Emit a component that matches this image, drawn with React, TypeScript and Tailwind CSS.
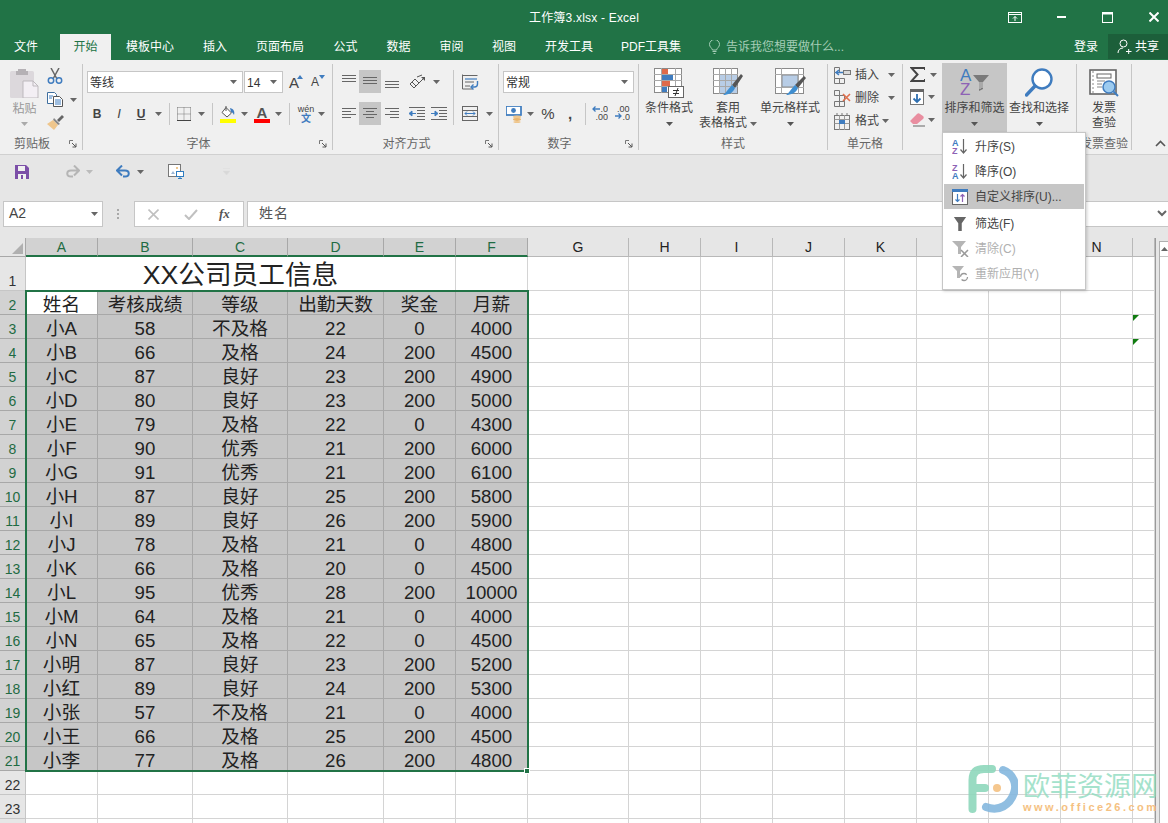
import React from 'react';

const F = { fontFamily: '"Liberation Sans","Noto Sans CJK SC",sans-serif' };

function Caret({ c = '#666' }: { c?: string }) {
  return (
    <svg width="7" height="4" viewBox="0 0 7 4" className="shrink-0">
      <path d="M0 0h7L3.5 4z" fill={c} />
    </svg>
  );
}

function Launcher() {
  return (
    <svg width="8" height="8" viewBox="0 0 8 8">
      <path d="M.5 4V.5H4M.5.5" fill="none" stroke="#777" />
      <path d="M3 3l4 4M7 3.5V7H3.5" fill="none" stroke="#555" />
    </svg>
  );
}

function Group({ className, label, launcher, children }: { className: string; label?: string; launcher?: boolean; children: React.ReactNode }) {
  return (
    <div className={`flex h-full shrink-0 flex-col border-r border-[#c6c6c6] ${className}`}>
      <div className="h-[74px] shrink-0">{children}</div>
      <div className="flex h-[12px] items-center">
        <div className="flex-1 text-center text-[12px] leading-[15px] text-[#666]">{label}</div>
        {launcher && (
          <div className="flex w-[18px] justify-center">
            <Launcher />
          </div>
        )}
      </div>
    </div>
  );
}

function Combo({ className, text }: { className: string; text: string }) {
  return (
    <div className={`flex h-[22px] items-center justify-between border border-[#c6c6c6] bg-white pl-[2px] pr-[5px] text-[12px] text-[#333] ${className}`}>
      <span className="pt-[2px]">{text}</span>
      <Caret />
    </div>
  );
}

function Slot({ className, children }: { className: string; children?: React.ReactNode }) {
  return <div className={`flex h-full shrink-0 items-center justify-center ${className}`}>{children}</div>;
}

function Sep() {
  return <div className="h-[22px] w-px bg-[#c6c6c6]" />;
}

function Lines({ ys, xs, w = 16, h = 14 }: { ys: number[]; xs: [number, number][]; w?: number; h?: number }) {
  return (
    <svg width={w} height={h} viewBox={`0 0 ${w} ${h}`}>
      {ys.map((y, i) => (
        <path key={i} d={`M${xs[i][0]} ${y + 0.5}H${xs[i][1]}`} stroke="#666" />
      ))}
    </svg>
  );
}

function Big({ className, lines, icon, caret = true, inline }: { className: string; lines: string[]; icon: React.ReactNode; caret?: boolean; inline?: boolean }) {
  return (
    <div className={`flex h-full shrink-0 flex-col items-center ${className}`}>
      <div className="flex h-[37px] w-full items-center justify-center">{icon}</div>
      {lines.map((l, i) => (
        <div key={i} className="flex items-center gap-[3px] whitespace-nowrap text-[12px] leading-[15px] text-[#444]">
          {l}
          {inline && i === lines.length - 1 && <Caret />}
        </div>
      ))}
      {caret && !inline && (
        <div className="flex h-[15px] items-center">
          <Caret c="#555" />
        </div>
      )}
    </div>
  );
}

function IconPaste() {
  return (
    <svg width="30" height="30" viewBox="0 0 30 30">
      <rect x="0" y="3" width="24" height="27" rx="1.5" fill="#dcd8dc" />
      <path d="M8 3V1h8v2h2v4H6V3z" fill="#b5b1b5" />
      <path d="M13 13h10l5 5v12H13z" fill="#f3eff4" stroke="#bdb9bd" />
      <path d="M23 13v5h5" fill="none" stroke="#bdb9bd" />
    </svg>
  );
}
function IconScissors() {
  return (
    <svg width="16" height="16" viewBox="0 0 16 16" fill="none">
      <path d="M4 0l6 11M12 0L6 11" stroke="#666" strokeWidth="1.5" />
      <circle cx="4" cy="12.5" r="2.7" stroke="#3f7cbf" strokeWidth="1.5" />
      <circle cx="12" cy="12.5" r="2.7" stroke="#3f7cbf" strokeWidth="1.5" />
    </svg>
  );
}
function IconCopy() {
  return (
    <svg width="16" height="15" viewBox="0 0 16 15" fill="none">
      <path d="M.5.5h7l2 2v9H.5z" fill="#fff" stroke="#3f6f9f" />
      <path d="M6.5 4.5h6l3 3v7h-9z" fill="#fff" stroke="#555" />
      <path d="M8 8h6M8 10h6M8 12h6" stroke="#3f7cbf" />
      <path d="M2 4h4M2 6h3" stroke="#3f7cbf" />
    </svg>
  );
}
function IconBrush() {
  return (
    <svg width="17" height="16" viewBox="0 0 17 16">
      <path d="M10 6l5-5 2 2-5 5z" fill="#666" />
      <path d="M7 4l6 6-2 1-5-5z" fill="#888" />
      <path d="M6 6l5 5-4 5-7-6z" fill="#efc68c" />
    </svg>
  );
}
function IconBorder() {
  return (
    <svg width="14" height="14" viewBox="0 0 14 14" fill="none">
      <path d="M.5.5h13M.5 7h13M.5.5v13M7 .5v13M13.5.5v13" stroke="#777" strokeDasharray="1 1" />
      <path d="M0 13.5h14" stroke="#444" />
    </svg>
  );
}
function IconFill() {
  return (
    <div className="flex w-[16px] flex-col items-center">
      <svg width="16" height="13" viewBox="0 0 16 13" fill="none">
        <path d="M6 1.5l5.5 5.5L7 11 2 6.5z" fill="#fff" stroke="#555" />
        <path d="M6 0v5" stroke="#555" />
        <path d="M10 2c4 1 5 4 4 7-1-2-2-3-3-3z" fill="#3f7cbf" />
      </svg>
      <div className="h-[4px] w-[16px] bg-[#ffff00]" />
    </div>
  );
}
function IconFontColor() {
  return (
    <div className="flex w-[16px] flex-col items-center">
      <span className="h-[13px] text-[15px] font-bold leading-[13px] text-[#555]">A</span>
      <div className="h-[4px] w-[16px] bg-[#ff0000]" />
    </div>
  );
}
function IconWen() {
  return (
    <div className="flex flex-col items-center">
      <span className="text-[9px] leading-[10px] text-[#444]">wén</span>
      <span className="text-[10px] font-bold leading-[10px] text-[#3f7cbf]">文</span>
    </div>
  );
}
function IconOrient() {
  return (
    <svg width="17" height="15" viewBox="0 0 17 15" fill="none">
      <path d="M1 10l5-5 4 4-5 5z" stroke="#555" />
      <path d="M3 8l4 4M8 3l5-2" stroke="#555" />
      <path d="M6 13L15 4" stroke="#555" />
      <path d="M12 3h4v4z" fill="#555" />
    </svg>
  );
}
function IconWrap() {
  return (
    <svg width="17" height="16" viewBox="0 0 17 16" fill="none">
      <path d="M.5 1.5h15M.5.5v14.5h10" stroke="#666" />
      <path d="M3 5h12" stroke="#3f7cbf" strokeWidth="1.2" />
      <path d="M3 8h9M3 12h5" stroke="#666" />
      <path d="M15.5 7v3c0 2-1 3-3 3H10" stroke="#3f7cbf" strokeWidth="1.4" />
      <path d="M11.5 10.5L9 13l2.5 2.5" stroke="#3f7cbf" strokeWidth="1.4" />
    </svg>
  );
}
function IconMerge() {
  return (
    <svg width="16" height="15" viewBox="0 0 16 15" fill="none">
      <rect x=".5" y=".5" width="15" height="14" stroke="#666" />
      <path d="M.5 4.5h15M.5 10.5h15" stroke="#666" />
      <path d="M3 7.5h10M3 7.5l2-2M3 7.5l2 2M13 7.5l-2-2M13 7.5l-2 2" stroke="#3f7cbf" />
    </svg>
  );
}
function IconIndent({ flip }: { flip?: boolean }) {
  return (
    <svg width="16" height="13" viewBox="0 0 16 13" fill="none">
      <path d="M0 .5h16M8 3.5h8M8 6.5h8M8 9.5h8M0 12.5h16" stroke="#666" />
      {flip ? (
        <path d="M0 6.5h4V4l3 2.5L4 9V6.5" fill="#3f7cbf" stroke="#3f7cbf" />
      ) : (
        <path d="M7 6.5H3V4L0 6.5 3 9V6.5" fill="#3f7cbf" stroke="#3f7cbf" />
      )}
    </svg>
  );
}
function IconCurrency() {
  return (
    <svg width="17" height="17" viewBox="0 0 17 17">
      <rect x="0" y="0" width="15" height="9" fill="#fff" stroke="#3f7cbf" />
      <rect x="0" y="0" width="15" height="9" fill="none" stroke="#3f7cbf" strokeWidth="1.5" />
      <circle cx="7.5" cy="4.5" r="2.4" fill="#3f7cbf" />
      <ellipse cx="11" cy="11" rx="4" ry="1.4" fill="#efc68c" />
      <ellipse cx="11" cy="13.5" rx="4" ry="1.4" fill="#e9b56e" />
      <ellipse cx="11" cy="16" rx="3.6" ry="1" fill="#efc68c" />
    </svg>
  );
}
function IconDec({ inc }: { inc?: boolean }) {
  return (
    <svg width="16" height="18" viewBox="0 0 16 18">
      <text x={inc ? 3 : 16} y="7" textAnchor={inc ? 'start' : 'end'} fontSize="9" fontFamily="Liberation Sans" fill="#444">{inc ? '.00' : '.0'}</text>
      <text x="16" y="15" textAnchor="end" fontSize="9" fontFamily="Liberation Sans" fill="#444">{inc ? '.0' : '.00'}</text>
      {inc ? <path d="M1 11h6M4.5 8.5L7 11l-2.5 2.5" stroke="#3f7cbf" fill="none" strokeWidth="1.3" /> : <path d="M8 4H1M3.5 1.5L1 4l2.5 2.5" stroke="#3f7cbf" fill="none" strokeWidth="1.3" />}
    </svg>
  );
}
function IconCond() {
  return (
    <svg width="31" height="30" viewBox="0 0 31 30" fill="none">
      <rect x=".5" y=".5" width="27" height="24" fill="#fff" stroke="#8a8a8a" />
      <path d="M7.5 0v25M21.5 0v25M0 6.5h28M0 12.5h28M0 18.5h28" stroke="#a8a8a8" />
      <rect x="8" y="1" width="6" height="5" fill="#de6a4a" />
      <rect x="8" y="7" width="11" height="5" fill="#3f7cbf" />
      <rect x="8" y="13" width="8" height="5" fill="#de6a4a" />
      <rect x="8" y="19" width="5" height="5" fill="#3f7cbf" />
      <rect x="14.5" y="18.5" width="15" height="11" fill="#fff" stroke="#666" />
      <path d="M19 22.5h6M19 25.5h6M24 20l-3 8" stroke="#333" />
    </svg>
  );
}
function IconTable() {
  return (
    <svg width="30" height="30" viewBox="0 0 30 30" fill="none">
      <rect x=".5" y=".5" width="24" height="25" fill="#fff" stroke="#8a8a8a" />
      <rect x="7" y="7" width="17" height="18" fill="#b8cde6" />
      <path d="M6.5 0v26M12.5 0v26M18.5 0v26M0 6.5h25M0 12.5h25M0 18.5h25" stroke="#a8a8a8" />
      <path d="M19 17L28 6l2 2-8 12z" fill="#555" />
      <path d="M19 17l3 3c-2 5-7 7-12 7 3-2 5-6 9-10z" fill="#3f8ed0" />
    </svg>
  );
}
function IconCellStyle() {
  return (
    <svg width="31" height="30" viewBox="0 0 31 30" fill="none">
      <rect x=".5" y=".5" width="28" height="25" fill="#fff" stroke="#8a8a8a" />
      <rect x="7" y="7" width="16" height="12" fill="#b8cde6" stroke="#8a8a8a" />
      <path d="M0 6.5h29M6.5 0v26M0 19.5h29M23.5 0v26" stroke="#a8a8a8" />
      <path d="M20 17l9-9 2 2-8 10z" fill="#555" />
      <path d="M20 17l3 3c-2 5-7 7-12 7 3-2 5-6 9-10z" fill="#3f8ed0" />
    </svg>
  );
}
function IconInsert() {
  return (
    <svg width="17" height="17" viewBox="0 0 17 17" fill="none">
      <path d="M.5.5h5v5h-5zM.5 11.5h5v5h-5zM5.5 11.5h5v5h-5z" stroke="#777" />
      <path d="M.5 5.5v6" stroke="#777" />
      <rect x="9.5" y="3.5" width="7" height="4" fill="#d8d8d8" stroke="#777" />
      <path d="M9 5.5H2M5 3L2 5.5 5 8" stroke="#3f7cbf" strokeWidth="1.5" />
    </svg>
  );
}
function IconDelete() {
  return (
    <svg width="17" height="17" viewBox="0 0 17 17" fill="none">
      <path d="M.5.5h5v5h-5zM.5 11.5h5v5h-5zM5.5 11.5h5v5h-5zM5.5 5.5h5v6h-5z" stroke="#777" />
      <path d="M9 4l7 7M16 4l-7 7" stroke="#e0704e" strokeWidth="1.6" />
    </svg>
  );
}
function IconFormat() {
  return (
    <svg width="17" height="17" viewBox="0 0 17 17" fill="none">
      <rect x=".5" y="2.5" width="15" height="14" stroke="#777" />
      <path d="M.5 6.5h15M.5 10.5h15M5.5 2v15M10.5 2v15" stroke="#999" />
      <path d="M3 0v2M8 0v2M13 0v2" stroke="#777" />
      <rect x="5" y="7" width="6" height="4" fill="#3f7cbf" />
    </svg>
  );
}
function IconSigma() {
  return (
    <svg width="15" height="15" viewBox="0 0 15 15" fill="none">
      <path d="M15 3V1H1.500l6 6.500L1.500 14H15v-2" stroke="#444" strokeWidth="2" />
    </svg>
  );
}
function IconFillDown() {
  return (
    <svg width="14" height="16" viewBox="0 0 14 16" fill="none">
      <rect x=".5" y=".5" width="13" height="15" fill="#fff" stroke="#777" />
      <rect x="0" y="0" width="14" height="3" fill="#666" />
      <path d="M7 5v8M3.500 9.500L7 13l3.500-3.500" stroke="#2f6fb0" strokeWidth="1.8" />
    </svg>
  );
}
function IconEraser() {
  return (
    <svg width="15" height="14" viewBox="0 0 15 14">
      <path d="M0 8l7-7c1-1 2-1 3 0l3 2c1 1 1 2 0 3L7 11H3z" fill="#e98ea0" />
      <path d="M3 13h12" stroke="#666" />
    </svg>
  );
}
function IconAZ({ w = 30, h = 33, az = true, size = 17, arrow, dy = 15, by = 29, bold }: { w?: number; h?: number; az?: boolean; size?: number; arrow?: React.ReactNode; dy?: number; by?: number; bold?: boolean }) {
  const top = az ? 'A' : 'Z';
  const bot = az ? 'Z' : 'A';
  const c1 = az ? '#3f7cbf' : '#8e62b5';
  const c2 = az ? '#8e62b5' : '#3f7cbf';
  const weight = bold ? 'bold' : 'normal';
  return (
    <svg width={w} height={h} viewBox={`0 0 ${w} ${h}`}>
      <text x="0" y={dy} fontSize={size} fontWeight={weight} fontFamily="Liberation Sans" fill={c1}>{top}</text>
      <text x="0" y={by} fontSize={size} fontWeight={weight} fontFamily="Liberation Sans" fill={c2}>{bot}</text>
      {arrow}
    </svg>
  );
}
function IconFind() {
  return (
    <svg width="28" height="29" viewBox="0 0 28 29" fill="none">
      <circle cx="17" cy="11" r="9.500" fill="#fff" stroke="#3f7cbf" strokeWidth="2.4" />
      <path d="M10 18L1.500 27" stroke="#3f7cbf" strokeWidth="3.4" strokeLinecap="round" />
    </svg>
  );
}
function IconInvoice() {
  return (
    <svg width="31" height="28" viewBox="0 0 31 28" fill="none">
      <rect x="1" y="1" width="26" height="24" fill="#fff" stroke="#666" strokeWidth="1.6" />
      <path d="M4 2v22" stroke="#888" strokeDasharray="2 2" />
      <rect x="8" y="5" width="14" height="4" stroke="#666" />
      <path d="M8 12h8M8 15h5M8 18h5" stroke="#888" />
      <circle cx="20" cy="18" r="6" fill="#9ccbf0" stroke="#3f7cbf" strokeWidth="1.5" />
      <path d="M24.500 22.500L29 27" stroke="#3f7cbf" strokeWidth="2" />
    </svg>
  );
}
function IconFunnel({ c = '#666', w = 14, h = 16 }: { c?: string; w?: number; h?: number }) {
  return (
    <svg width={w} height={h} viewBox="0 0 14 16">
      <path d="M0 0h14L9 7v9H5V7z" fill={c} />
    </svg>
  );
}

const ROWS: string[][] = [
  ['小A', '58', '不及格', '22', '0', '4000'],
  ['小B', '66', '及格', '24', '200', '4500'],
  ['小C', '87', '良好', '23', '200', '4900'],
  ['小D', '80', '良好', '23', '200', '5000'],
  ['小E', '79', '及格', '22', '0', '4300'],
  ['小F', '90', '优秀', '21', '200', '6000'],
  ['小G', '91', '优秀', '21', '200', '6100'],
  ['小H', '87', '良好', '25', '200', '5800'],
  ['小I', '89', '良好', '26', '200', '5900'],
  ['小J', '78', '及格', '21', '0', '4800'],
  ['小K', '66', '及格', '20', '0', '4500'],
  ['小L', '95', '优秀', '28', '200', '10000'],
  ['小M', '64', '及格', '21', '0', '4000'],
  ['小N', '65', '及格', '22', '0', '4500'],
  ['小明', '87', '良好', '23', '200', '5200'],
  ['小红', '89', '良好', '24', '200', '5300'],
  ['小张', '57', '不及格', '21', '0', '4000'],
  ['小王', '66', '及格', '25', '200', '4500'],
  ['小李', '77', '及格', '26', '200', '4800'],
];
const HEAD = ['考核成绩', '等级', '出勤天数', '奖金', '月薪'];
const COLS = ['A', 'B', 'C', 'D', 'E', 'F', 'G', 'H', 'I', 'J', 'K', 'L', 'M', 'N', ''];
const TEMPLATE = 'grid grid-cols-[26px_72px_95px_95px_96px_72px_72px_101px_72px_72px_72px_72px_72px_72px_72px_22px]';

function RowHead({ n, sel, tall }: { n?: number; sel: boolean; tall?: boolean }) {
  return (
    <div className={`flex items-end justify-center border-r border-b text-[14px] leading-[18px] ${tall ? 'h-[34px]' : 'h-[24px]'} ${sel ? 'border-[#a8a8a8] bg-[#d2d2d2] text-[#1f6b43]' : 'border-[#c6c6c6] bg-[#e6e6e6] text-[#333]'}`}>
      {n}
    </div>
  );
}

function Sel({ children, white }: { children?: React.ReactNode; white?: boolean }) {
  return (
    <div className={`flex h-[24px] items-start justify-center border-r border-b border-[#a8a8a8] text-[18.67px] leading-[28px] text-[#222] ${white ? 'bg-white' : 'bg-[#c6c6c6]'}`}>
      {children}
    </div>
  );
}

function Blank({ children }: { children?: React.ReactNode }) {
  return <div className="h-[24px] border-r border-b border-[#d4d4d4] bg-white">{children}</div>;
}

function Tri() {
  return <div className="h-0 w-0 border-t-[6px] border-r-[6px] border-t-[#107c10] border-r-transparent" />;
}

function BlankRest({ row }: { row: number }) {
  return (
    <>
      {Array.from({ length: 8 }).map((_, i) => (
        <Blank key={i} />
      ))}
      <Blank>{(row === 3 || row === 4) && <Tri />}</Blank>
    </>
  );
}

function MenuItem({ icon, text, hi, dis, className = '' }: { icon: React.ReactNode; text: string; hi?: boolean; dis?: boolean; className?: string }) {
  return (
    <div className={`flex h-[25px] items-center ${hi ? 'bg-[#c6c6c6]' : ''} ${className}`}>
      <div className="flex w-[31px] justify-center pl-[1px]">{icon}</div>
      <span className={`text-[12px] ${dis ? 'text-[#b0b0b0]' : 'text-[#444]'}`}>{text}</span>
    </div>
  );
}

const Arrow = <path d="M11.500 1v14M8.500 11.500l3 3.500 3-3.500" fill="none" stroke="#666" strokeWidth="1.200" />;

export default function App() {
  return (
    <div className="relative h-[823px] w-[1168px] overflow-hidden bg-white" style={F}>
      {/* Title bar */}
      <div className="grid h-[34px] grid-cols-[1fr_auto_1fr] items-center bg-[#217346] text-white">
        <div />
        <div className="pt-[1px] text-[12px] tracking-[0.2px]">工作簿3.xlsx - Excel</div>
        <div className="flex h-full items-center justify-end">
          <Slot className="w-[46px]">
            <svg width="14" height="11" viewBox="0 0 14 11" fill="none">
              <rect x=".5" y=".5" width="13" height="10" stroke="#fff" />
              <path d="M1 2.500h12" stroke="#fff" />
              <path d="M7 9V4.500M5 6.500l2-2 2 2" stroke="#fff" />
            </svg>
          </Slot>
          <Slot className="w-[46px]">
            <div className="h-[2px] w-[9px] bg-white" />
          </Slot>
          <Slot className="w-[47px]">
            <svg width="11" height="11" viewBox="0 0 11 11" fill="none">
              <rect x=".5" y=".5" width="10" height="10" stroke="#fff" />
              <path d="M0 1.500h11" stroke="#fff" strokeWidth="2" />
            </svg>
          </Slot>
          <Slot className="w-[37px] pl-[9px]">
            <svg width="10" height="10" viewBox="0 0 10 10" fill="none">
              <path d="M.5.500l9 9M9.500.500l-9 9" stroke="#fff" strokeWidth="2" />
            </svg>
          </Slot>
        </div>
      </div>

      {/* Tabs */}
      <div className="flex h-[26px] items-stretch bg-[#217346] text-[12px] text-white">
        <Slot className="w-[52px]">文件</Slot>
        <div className="w-[8px]" />
        <Slot className="w-[51px] bg-[#f0f0f0] text-[#217346]">开始</Slot>
        <Slot className="w-[78px]">模板中心</Slot>
        <Slot className="w-[52px]">插入</Slot>
        <Slot className="w-[78px]">页面布局</Slot>
        <Slot className="w-[53px]">公式</Slot>
        <Slot className="w-[53px]">数据</Slot>
        <Slot className="w-[53px]">审阅</Slot>
        <Slot className="w-[52px]">视图</Slot>
        <Slot className="w-[78px]">开发工具</Slot>
        <Slot className="w-[86px]">PDF工具集</Slot>
        <Slot className="ml-[14px] w-[13px]">
          <svg width="11" height="14" viewBox="0 0 11 14" fill="none">
            <path d="M3.500 10C3 8 .5 7 .5 4.500a5 5 0 0 1 10 0C10.500 7 8 8 7.500 10z" stroke="#a5cdb6" />
            <path d="M3.500 11.500h4M4.500 13.500h2" stroke="#a5cdb6" />
          </svg>
        </Slot>
        <Slot className="ml-[5px] text-[#a5cdb6]">告诉我您想要做什么...</Slot>
        <div className="flex-1" />
        <Slot className="w-[44px]">登录</Slot>
        <div className="mb-[1px] flex w-[60px] items-center justify-center gap-[3px] bg-[#1c5f3a]">
          <svg width="15" height="15" viewBox="0 0 15 15" fill="none">
            <circle cx="6.500" cy="4.500" r="3.500" stroke="#fff" />
            <path d="M1 14c0-3 2-5 5-5M9 12.500h5.500M11.700 10v5" stroke="#fff" />
          </svg>
          共享
        </div>
      </div>

      {/* Ribbon */}
      <div className="flex h-[95px] items-start border-b border-[#d0d0d0] bg-[#f0f0f0] pt-[4px]">
        <div className="flex h-[86px] w-full">
          <Group className="w-[83px]" label="剪贴板" launcher>
            <div className="flex h-full">
              <div className="flex w-[45px] flex-col items-center pl-[4px] pt-[4px]">
                <IconPaste />
                <div className="mt-[4px] text-[12px] leading-[15px] text-[#999]">粘贴</div>
                <div className="mt-[5px]"><Caret c="#aaa" /></div>
              </div>
              <div className="flex flex-1 flex-col items-start pl-[1px]">
                <Slot className="!h-[24px] w-[18px]"><IconScissors /></Slot>
                <div className="flex h-[23px] items-center gap-[6px]">
                  <Slot className="w-[18px]"><IconCopy /></Slot>
                  <Caret />
                </div>
                <Slot className="!h-[22px] w-[18px]"><IconBrush /></Slot>
              </div>
            </div>
          </Group>

          <Group className="w-[250px]" label="字体" launcher>
            <div className="flex flex-col pt-[7px]">
              <div className="flex items-center pl-[4px]">
                <Combo className="w-[156px]" text="等线" />
                <Combo className="ml-[1px] w-[39px]" text="14" />
                <Slot className="ml-[2px] w-[22px]">
                  <span className="text-[15px] leading-none text-[#444]">A</span>
                  <svg width="6" height="4" viewBox="0 0 6 4" className="-ml-[2px] -mt-[10px]"><path d="M3 0l3 4H0z" fill="#3f7cbf" /></svg>
                </Slot>
                <Slot className="w-[22px]">
                  <span className="text-[12px] leading-none text-[#444]">A</span>
                  <svg width="6" height="4" viewBox="0 0 6 4" className="-mt-[10px]"><path d="M0 0h6L3 4z" fill="#3f7cbf" /></svg>
                </Slot>
              </div>
              <div className="mt-[9px] flex h-[24px] items-center pl-[3px]">
                <Slot className="w-[22px] text-[12px] font-bold text-[#444]">B</Slot>
                <Slot className="w-[22px] text-[13px] italic text-[#444]">I</Slot>
                <Slot className="w-[22px] text-[12px] font-bold text-[#444] underline">U</Slot>
                <Slot className="w-[12px]"><Caret /></Slot>
                <Slot className="w-[10px]"><Sep /></Slot>
                <Slot className="w-[20px]"><IconBorder /></Slot>
                <Slot className="w-[14px]"><Caret /></Slot>
                <Slot className="w-[8px]"><Sep /></Slot>
                <Slot className="w-[24px]"><IconFill /></Slot>
                <Slot className="w-[9px]"><Caret /></Slot>
                <Slot className="w-[26px]"><IconFontColor /></Slot>
                <Slot className="w-[7px]"><Caret /></Slot>
                <Slot className="w-[14px]"><Sep /></Slot>
                <Slot className="w-[20px]"><IconWen /></Slot>
                <Slot className="w-[10px]"><Caret /></Slot>
              </div>
            </div>
          </Group>

          <Group className="w-[166px]" label="对齐方式" launcher>
            <div className="flex h-full pl-[5px] pt-[6px]">
              <div className="flex h-[55px] w-[116px] flex-col justify-between border-r border-[#c6c6c6]">
                <div className="flex h-[23px]">
                  <Slot className="w-[21px]"><Lines w={14} h={14} ys={[0, 3, 6]} xs={[[0, 14], [0, 14], [0, 14]]} /></Slot>
                  <Slot className="w-[22px] bg-[#c6c6c6]"><Lines w={14} h={9} ys={[0, 3, 6]} xs={[[0, 14], [0, 14], [0, 14]]} /></Slot>
                  <Slot className="w-[22px]"><div className="pt-[7px]"><Lines w={14} h={8} ys={[0, 3, 6]} xs={[[0, 14], [0, 14], [0, 14]]} /></div></Slot>
                  <Slot className="w-[28px]"><IconOrient /></Slot>
                  <Slot className="w-[10px]"><Caret /></Slot>
                </div>
                <div className="flex h-[23px]">
                  <Slot className="w-[21px]"><Lines w={14} h={11} ys={[0, 3, 6, 9]} xs={[[0, 14], [0, 9], [0, 14], [0, 9]]} /></Slot>
                  <Slot className="w-[22px] bg-[#c6c6c6]"><Lines w={14} h={11} ys={[0, 3, 6, 9]} xs={[[0, 14], [3, 11], [0, 14], [3, 11]]} /></Slot>
                  <Slot className="w-[22px]"><Lines w={14} h={11} ys={[0, 3, 6, 9]} xs={[[0, 14], [5, 14], [0, 14], [5, 14]]} /></Slot>
                  <Slot className="w-[28px]"><IconIndent /></Slot>
                  <Slot className="w-[16px]"><IconIndent flip /></Slot>
                </div>
              </div>
              <div className="flex h-[55px] flex-col justify-between">
                <div className="flex h-[24px] w-[32px] items-center justify-center"><IconWrap /></div>
                <div className="flex h-[23px] items-center">
                  <Slot className="w-[32px]"><IconMerge /></Slot>
                  <Caret />
                </div>
              </div>
            </div>
          </Group>

          <Group className="w-[140px]" label="数字" launcher>
            <div className="flex flex-col pl-[4px] pt-[7px]">
              <Combo className="w-[131px]" text="常规" />
              <div className="mt-[9px] flex h-[24px] items-center">
                <Slot className="w-[22px]"><IconCurrency /></Slot>
                <Slot className="w-[10px]"><Caret /></Slot>
                <Slot className="ml-[2px] w-[22px] text-[15px] text-[#444]">%</Slot>
                <Slot className="w-[22px] text-[15px] font-bold text-[#444]">,</Slot>
                <Slot className="w-[8px]"><Sep /></Slot>
                <Slot className="w-[22px]"><IconDec /></Slot>
                <Slot className="w-[22px]"><IconDec inc /></Slot>
              </div>
            </div>
          </Group>

          <Group className="w-[189px]" label="样式">
            <div className="flex h-full pl-px">
              <Big className="w-[58px]" lines={['条件格式']} icon={<IconCond />} />
              <Big className="w-[60px]" lines={['套用', '表格格式']} icon={<IconTable />} caret={false} inline />
              <Big className="w-[64px]" lines={['单元格样式']} icon={<IconCellStyle />} />
            </div>
          </Group>

          <Group className="w-[75px]" label="单元格">
            <div className="flex h-full flex-col pl-[6px] text-[12px] text-[#444]">
              <div className="flex h-[22px] items-center">
                <IconInsert />
                <span className="ml-[4px]">插入</span>
                <span className="ml-[9px]"><Caret /></span>
              </div>
              <div className="flex h-[24px] items-center">
                <IconDelete />
                <span className="ml-[4px]">删除</span>
                <span className="ml-[9px]"><Caret /></span>
              </div>
              <div className="flex h-[22px] items-center">
                <IconFormat />
                <span className="ml-[4px]">格式</span>
                <span className="ml-[3px]"><Caret /></span>
              </div>
            </div>
          </Group>

          <Group className="w-[174px]">
            <div className="flex h-full">
              <div className="flex w-[39px] flex-col pl-[7px]">
                <div className="flex h-[21px] items-center gap-[5px]"><IconSigma /><Caret /></div>
                <div className="flex h-[24px] items-center gap-[4px]"><IconFillDown /><Caret /></div>
                <div className="flex h-[22px] items-center gap-[3px]"><IconEraser /><Caret /></div>
              </div>
              <Big
                className="-mt-[1px] !h-[69px] w-[65px] bg-[#c6c6c6] pt-[1px]"
                lines={['排序和筛选']}
                icon={
                  <IconAZ
                    arrow={<g transform="translate(13 9)"><path d="M0 0h16L10 7v7l-4 2V7z" fill="#7a7a7a" /><path d="M7 7v7M9 7v6" stroke="#d8d8d8" /></g>}
                  />
                }
              />
              <Big className="w-[64px]" lines={['查找和选择']} icon={<IconFind />} />
            </div>
          </Group>

          <Group className="w-[55px]" label="发票查验">
            <Big className="w-full" lines={['发票', '查验']} icon={<IconInvoice />} caret={false} />
          </Group>

          <div className="flex flex-1 items-end justify-end pb-[3px] pr-[2px]">
            <svg width="11" height="7" viewBox="0 0 11 7" fill="none">
              <path d="M1 6l4.500-4.500L10 6" stroke="#555" strokeWidth="1.6" />
            </svg>
          </div>
        </div>
      </div>

      {/* Quick access bar */}
      <div className="flex h-[33px] items-center bg-[#e6e6e6] pl-[15px]">
        <svg width="14" height="14" viewBox="0 0 14 14">
          <path d="M0 0h11l3 3v11H0z" fill="#7c4fa8" />
          <rect x="3" y="1" width="7" height="5" fill="#f0f0f0" />
          <rect x="3" y="9" width="8" height="5" fill="#f0f0f0" />
          <rect x="6" y="10" width="2" height="4" fill="#7c4fa8" />
        </svg>
        <div className="ml-[36px]">
          <svg width="15" height="13" viewBox="0 0 15 13" fill="none">
            <path d="M13 6H6c-5 0-5 6 0 6h2M9 1l5 5-5 5" stroke="#b5b5b5" strokeWidth="2" transform="translate(0 -.5)" />
          </svg>
        </div>
        <div className="ml-[6px]"><Caret c="#bbb" /></div>
        <div className="ml-[23px]">
          <svg width="15" height="13" viewBox="0 0 15 13" fill="none">
            <path d="M2 6h7c5 0 5 6 0 6H7M6 1L1 6l5 5" stroke="#3f7cbf" strokeWidth="2" transform="translate(0 -.5)" />
          </svg>
        </div>
        <div className="ml-[6px]"><Caret /></div>
        <div className="ml-[24px]">
          <svg width="16" height="15" viewBox="0 0 16 15" fill="none">
            <rect x=".5" y=".5" width="12" height="12" fill="#fff" stroke="#777" />
            <path d="M3 10l2-3 2 3z" fill="#9cb7d6" />
            <rect x="8" y="3" width="2" height="2" fill="#efc68c" />
            <rect x="8.500" y="7.500" width="7" height="5" fill="#fff" stroke="#2f7cc0" />
            <path d="M12 13v2M10 14.500h4" stroke="#2f7cc0" />
          </svg>
        </div>
        <div className="ml-[39px] h-[7px] w-[7px]">
          <svg width="7" height="7" viewBox="0 0 7 7"><path d="M0 .5h7M0 3h7L3.500 7z" fill="#d8d8d8" stroke="#dcdcdc" strokeWidth=".5" /></svg>
        </div>
      </div>

      {/* Formula bar */}
      <div className="flex h-[50px] items-start bg-[#e6e6e6] pl-[3px] pt-[13px]">
        <div className="flex h-[26px] w-[100px] items-center justify-between border border-[#c6c6c6] bg-white pb-[1px] pl-[5px] pr-[4px] text-[14px] text-[#444]">
          A2
          <Caret c="#666" />
        </div>
        <div className="flex h-[26px] w-[31px] items-center justify-center">
          <svg width="3" height="11" viewBox="0 0 3 11"><path d="M0 0h2v2H0zM0 4h2v2H0zM0 8h2v2H0z" fill="#a8a8a8" /></svg>
        </div>
        <div className="flex h-[26px] w-[110px] items-center border border-[#c6c6c6] bg-white pl-[13px]">
          <svg width="11" height="11" viewBox="0 0 11 11" fill="none"><path d="M.5.500l10 10M10.500.500l-10 10" stroke="#c0c0c0" strokeWidth="1.600" /></svg>
          <svg width="14" height="11" viewBox="0 0 14 11" fill="none" className="ml-[25px]"><path d="M1 6l4 4 8-9" stroke="#c0c0c0" strokeWidth="2" /></svg>
          <span className="ml-[21px] text-[13px] font-bold italic text-[#555]" style={{ fontFamily: '"Liberation Serif",serif' }}>fx</span>
        </div>
        <div className="ml-[3px] flex h-[26px] flex-1 items-center justify-between border-y border-l border-[#c6c6c6] bg-white pb-[1px] pl-[11px] pr-[1px]">
          <span className="text-[14px] tracking-[1px] text-[#555]">姓名</span>
          <svg width="10" height="7" viewBox="0 0 10 7" fill="none"><path d="M1 1l4 4 4-4" stroke="#666" strokeWidth="2" /></svg>
        </div>
      </div>

      {/* Sheet */}
      <div className="flex">
        <div className="border-r border-[#9a9a9a]">
          <div className={TEMPLATE}>
            <div className="flex h-[19px] items-end justify-end border-r border-b border-[#a8a8a8] bg-[#e6e6e6] pb-[2px] pr-[2px]">
              <svg width="11" height="11" viewBox="0 0 11 11"><path d="M11 0v11H0z" fill="#b0b0b0" /></svg>
            </div>
            {COLS.map((c, i) => (
              <div
                key={i}
                className={`flex h-[19px] items-center justify-center border-r pt-[1px] text-[14px] ${i < 6 ? 'border-b-2 border-[#a8a8a8] border-b-[#217346] bg-[#d2d2d2] text-[#1f6b43]' : 'border-b border-[#b8b8b8] bg-[#e6e6e6] text-[#222]'}`}
              >
                {c}
              </div>
            ))}

            <RowHead n={1} sel={false} tall />
            <div className="col-span-5 flex h-[34px] items-center justify-center border-r border-b border-[#d4d4d4] pt-[2px] text-[26.67px] text-[#222]">XX公司员工信息</div>
            <div className="h-[34px] border-r border-b border-[#d4d4d4]" />
            {Array.from({ length: 9 }).map((_, i) => (
              <div key={i} className="h-[34px] border-r border-b border-[#d4d4d4]" />
            ))}

            <RowHead n={2} sel />
            <Sel white>姓名</Sel>
            {HEAD.map((h) => (
              <Sel key={h}>{h}</Sel>
            ))}
            <BlankRest row={2} />

            {ROWS.map((r, i) => (
              <React.Fragment key={i}>
                <RowHead n={i + 3} sel />
                {r.map((v, j) => (
                  <Sel key={j}>{v}</Sel>
                ))}
                <BlankRest row={i + 3} />
              </React.Fragment>
            ))}

            {[22, 23, 0].map((n) => (
              <React.Fragment key={n}>
                <RowHead n={n || undefined} sel={false} />
                {Array.from({ length: 15 }).map((_, i) => (
                  <Blank key={i} />
                ))}
              </React.Fragment>
            ))}
          </div>
        </div>
        <div className="flex h-[600px] flex-1 bg-[#e6e6e6] pl-[3px] pt-[3px]">
          <div className="h-full flex-1 border-l border-t border-[#b0b0b0] bg-white">
            <div className="flex h-[15px] items-center justify-center border-b border-[#c6c6c6]">
              <svg width="7" height="4" viewBox="0 0 7 4"><path d="M3.500 0L7 4H0z" fill="#666" /></svg>
            </div>
          </div>
        </div>
      </div>

      {/* Selection outline */}
      <div className="pointer-events-none absolute left-[25px] top-[290px] h-[482px] w-[504px] border-2 border-[#217346]" />
      <div className="absolute left-[524px] top-[768px] h-[6px] w-[6px] border border-white bg-[#217346]" />

      {/* Dropdown menu */}
      <div className="absolute left-[942px] top-[132px] w-[144px] border border-[#c6c6c6] bg-white px-px pb-[3px] pt-px shadow-[1px_1px_3px_rgba(0,0,0,0.2)]">
        <MenuItem text="升序(S)" icon={<IconAZ w={16} h={18} size={9} dy={8} by={16} bold arrow={Arrow} />} />
        <MenuItem text="降序(O)" icon={<IconAZ w={16} h={18} size={9} dy={8} by={16} bold az={false} arrow={Arrow} />} />
        <MenuItem
          hi
          text="自定义排序(U)..."
          icon={
            <svg width="16" height="16" viewBox="0 0 16 16" fill="none">
              <rect x=".5" y=".5" width="15" height="15" fill="#fff" stroke="#666" />
              <rect x="0" y="0" width="16" height="3" fill="#3f7cbf" />
              <path d="M5.500 5v8M3.500 10.500l2 2 2-2" stroke="#3f7cbf" strokeWidth="1.200" />
              <path d="M10.500 13V5M8.500 7.500l2-2 2 2" stroke="#8e62b5" strokeWidth="1.200" />
            </svg>
          }
        />
        <MenuItem className="mt-[2px]" text="筛选(F)" icon={<IconFunnel c="#666" w={16} h={14} />} />
        <MenuItem
          dis
          text="清除(C)"
          icon={
            <svg width="17" height="16" viewBox="0 0 17 16" fill="none">
              <path d="M0 0h14L9 6v7H6V6z" fill="#b5b5b5" />
              <path d="M9 9l7 7M16 9l-7 7" stroke="#999" strokeWidth="1.500" />
            </svg>
          }
        />
        <MenuItem
          dis
          text="重新应用(Y)"
          icon={
            <svg width="17" height="16" viewBox="0 0 17 16" fill="none">
              <path d="M0 0h12L8 5v7H5V5z" fill="#b5b5b5" />
              <circle cx="12" cy="11" r="3.500" stroke="#999" strokeWidth="1.300" strokeDasharray="8 3" />
            </svg>
          }
        />
      </div>

      {/* Watermark */}
      <div className="pointer-events-none absolute left-[968px] top-[763px] flex items-start">
        <svg width="50" height="52" viewBox="0 0 50 52" fill="none" opacity="0.9">
          <path d="M4.500 46V17C4.500 9 9 6 16 6h8" stroke="#8fd8bc" strokeWidth="8" strokeLinecap="round" />
          <path d="M5 25h12" stroke="#8fd8bc" strokeWidth="8" strokeLinecap="round" />
          <path d="M35 7c11 4 14 15 11 23-4 12-15 19-28 14" stroke="#85b8de" strokeWidth="8" strokeLinecap="round" />
          <circle cx="29" cy="25" r="4" fill="#f5c182" />
        </svg>
        <div className="ml-[5px] mt-[11px] flex flex-col">
          <span className="whitespace-nowrap text-[27px] leading-[26px] text-[#8fdcc0] opacity-80">欧菲资源网</span>
          <span className="mt-[1px] whitespace-nowrap text-[11px] font-bold leading-[12px] tracking-[2.5px] text-[#f5c182]">www.office26.com</span>
        </div>
      </div>
    </div>
  );
}
